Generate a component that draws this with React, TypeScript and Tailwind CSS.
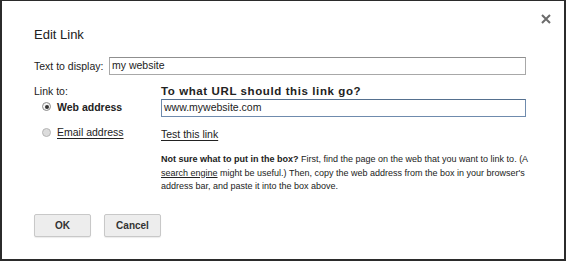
import React from 'react';

const font = "font-['Liberation_Sans',Arial,sans-serif]";

function Radio({ checked }: { checked?: boolean }) {
  return (
    <span
      className={`w-[9px] h-[9px] rounded-full border flex items-center justify-center shrink-0 ${
        checked ? 'border-[#8a8a8a] bg-[#f4f4f4]' : 'border-[#b5b5b5] bg-[#dcdcdc]'
      }`}
    >
      {checked && <span className="w-[4px] h-[4px] rounded-full bg-[#333]" />}
    </span>
  );
}

export default function App() {
  return (
    <div
      className={`relative w-[566px] h-[261px] bg-white border-[#2b2b2b] border-t border-l-2 border-r-2 border-b-2 text-[#222] ${font}`}
    >
      {/* close */}
      <button className="absolute left-[538px] top-[12px] w-[11px] h-[11px] flex items-center justify-center">
        <svg width="10" height="10" viewBox="0 0 10 10">
          <path d="M1 1 L9 9 M9 1 L1 9" stroke="#6b6b6b" strokeWidth="2" />
        </svg>
      </button>

      <div className="pl-[32px] pt-[26px]">
        <h2 className="text-[13px] leading-[16px] text-[#222]">Edit Link</h2>

        {/* text to display */}
        <div className="mt-[14px] flex items-center">
          <label className="w-[75px] text-[10.5px] leading-[12px]">Text to display:</label>
          <div className="w-[417px] h-[18px] border border-[#a8a8a8] border-t-[#8f8f8f] flex items-center px-[2px] text-[10.5px]">
            my website
          </div>
        </div>

        <div className="mt-[10px] flex">
          {/* link to column */}
          <div className="w-[127px] text-[10.5px] leading-[12px]">
            <div>Link to:</div>
            <div className="mt-[3.5px] pl-[8px] flex items-center gap-[6px]">
              <Radio checked />
              <span className="font-bold text-[10.5px]">Web address</span>
            </div>
            <div className="mt-[13.5px] pl-[8px] flex items-center gap-[6px]">
              <Radio />
              <span className="underline underline-offset-2">Email address</span>
            </div>
          </div>

          {/* url column */}
          <div className="w-[365px]">
            <div className="font-bold text-[11.5px] tracking-[0.6px] leading-[13px]">
              To what URL should this link go?
            </div>
            <div className="mt-[1px] h-[18px] border border-[#6f8bad] border-t-[#55708f] flex items-center px-[2px] text-[10.5px]">
              www.mywebsite.com
            </div>
            <div className="mt-[11px] text-[10.5px] leading-[12px] underline underline-offset-2">
              Test this link
            </div>
            <p className="mt-[13px] text-[9px] leading-[13.5px] text-[#222] whitespace-nowrap">
              <span className="font-bold">Not sure what to put in the box?</span> First, find the page on the web that
              you want to link to. (A
              <br />
              <span className="underline">search engine</span> might be useful.) Then, copy the web address from the box
              in your browser's
              <br />
              address bar, and paste it into the box above.
            </p>
          </div>
        </div>

        {/* buttons */}
        <div className="mt-[20px] flex gap-[13px]">
          <button className="w-[57px] h-[23px] rounded-[2px] border border-[#c8c8c8] bg-[#ededed] text-[10px] font-bold text-[#333] shadow-[0_1px_1px_rgba(0,0,0,0.08)]">
            OK
          </button>
          <button className="w-[57px] h-[23px] rounded-[2px] border border-[#c8c8c8] bg-[#ededed] text-[10px] font-bold text-[#333] shadow-[0_1px_1px_rgba(0,0,0,0.08)]">
            Cancel
          </button>
        </div>
      </div>
    </div>
  );
}
